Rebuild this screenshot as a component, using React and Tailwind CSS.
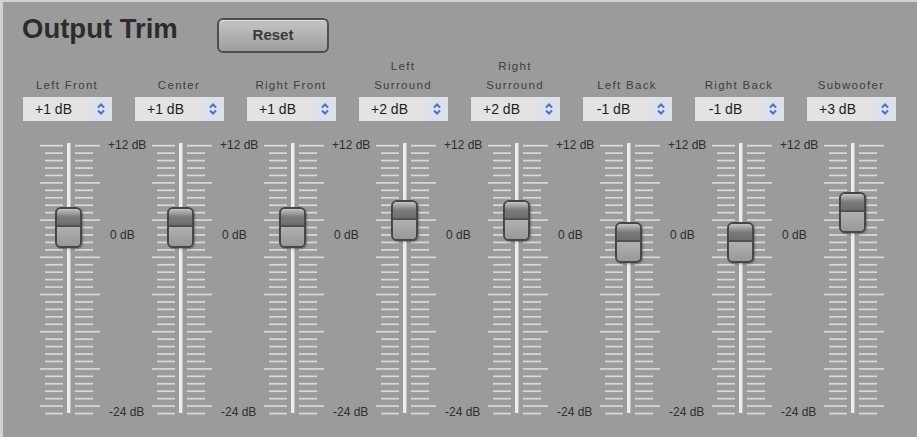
import React from 'react';

const channels = [
  { name: ['Left Front'], value: 1 },
  { name: ['Center'], value: 1 },
  { name: ['Right Front'], value: 1 },
  { name: ['Left', 'Surround'], value: 2 },
  { name: ['Right', 'Surround'], value: 2 },
  { name: ['Left Back'], value: -1 },
  { name: ['Right Back'], value: -1 },
  { name: ['Subwoofer'], value: 3, noScale: true },
];

const STEP = 7.44;
const TOP = 5.7;

const fmt = (v) => (v > 0 ? `+${v} dB` : `${v} dB`);

const Scale = () => {
  const ticks = [];
  for (let i = 0; i <= 36; i++) {
    const y = TOP + i * STEP;
    const long = i % 5 === 0 && i < 36;
    ticks.push(
      <g key={i}>
        <line x1={long ? 28 : 33} x2={51} y1={y} y2={y} stroke="#d9d9d9" strokeWidth="1.7" />
        <line x1={63} x2={long ? 88 : 81} y1={y} y2={y} stroke="#d9d9d9" strokeWidth="1.7" />
      </g>
    );
  }
  return (
    <svg width="112" height="280" className="block">
      {ticks}
      <rect x="55" y="3" width="4" height="270" fill="#ececec" />
      <rect x="58" y="3" width="1" height="270" fill="#bdbdbd" />
    </svg>
  );
};

const Thumb = ({ value }) => {
  const top = TOP + (12 - value) * STEP - 20.5;
  return (
    <div
      className="absolute left-[43px] w-[27px] h-[41px] rounded-[6px] border-2 border-[#474747] bg-[#a0a0a0] flex flex-col overflow-hidden shadow-[1px_1px_2px_rgba(0,0,0,0.35)]"
      style={{ top }}
    >
      <div className="h-[18px] bg-gradient-to-b from-[#c4c4c4] via-[#7c7c7c] to-[#6e6e6e] border-b-2 border-[#505050]" />
      <div className="flex-1 bg-gradient-to-b from-[#b0b0b0] to-[#989898]" />
    </div>
  );
};

const Spinner = () => (
  <div className="w-[22px] h-full bg-[#dde1ec] flex items-center justify-center">
    <svg width="10" height="16" viewBox="0 0 10 16">
      <path d="M2 6.5 L5 3.5 L8 6.5" fill="none" stroke="#4d6fd0" strokeWidth="2" />
      <path d="M2 9.5 L5 12.5 L8 9.5" fill="none" stroke="#4d6fd0" strokeWidth="2" />
    </svg>
  </div>
);

const Channel = ({ ch }) => (
  <div className="w-[112px] flex flex-col">
    <div className="h-[39px] flex flex-col justify-end items-center pr-[2px]">
      {ch.name.map((n) => (
        <div key={n} className="h-[19px] leading-[19px] text-[11.5px] tracking-[1.3px] text-[#3e3e3e]">
          {n}
        </div>
      ))}
    </div>
    <div className="mt-[2px] ml-[11px] w-[89px] h-[24px] flex bg-[#e3e3e3]">
      <div className="flex-1 flex items-center justify-center pr-[6px] text-[14px] text-[#1e1e1e]">
        {fmt(ch.value)}
      </div>
      <Spinner />
    </div>
    <div className="relative mt-[19px] h-[280px]">
      <Scale />
      <Thumb value={ch.value} />
      {!ch.noScale && (
        <>
          <span className="absolute left-[96px] top-[-2px] text-[12px] leading-[14px] text-[#2e2e2e] whitespace-nowrap">+12 dB</span>
          <span className="absolute left-[98px] top-[88px] text-[12px] leading-[14px] text-[#2e2e2e] whitespace-nowrap">0 dB</span>
          <span className="absolute left-[97px] top-[265px] text-[12px] leading-[14px] text-[#2e2e2e] whitespace-nowrap">-24 dB</span>
        </>
      )}
    </div>
  </div>
);

export default function App() {
  return (
    <div className="w-[917px] h-[437px] overflow-hidden bg-[#9b9b9b] border-t-2 border-l-[3px] border-[#d2d2d2] font-['Liberation_Sans',Arial,sans-serif]">
      <div className="h-[54px] flex items-start pl-[19px]">
        <div className="w-[195px] mt-[12px] text-[27.5px] leading-[30px] font-bold text-[#2c2c2c]">Output Trim</div>
        <button className="mt-[16px] w-[112px] h-[35px] rounded-[6px] border-2 border-[#4e4e4e] bg-gradient-to-b from-[#c4c4c4] to-[#9e9e9e] text-[15px] font-bold text-[#3a3a3a] shadow-[inset_0_1px_0_rgba(255,255,255,0.5)]">
          Reset
        </button>
      </div>
      <div className="flex pl-[9px]">
        {channels.map((ch) => (
          <Channel key={ch.name.join(' ')} ch={ch} />
        ))}
      </div>
    </div>
  );
}
